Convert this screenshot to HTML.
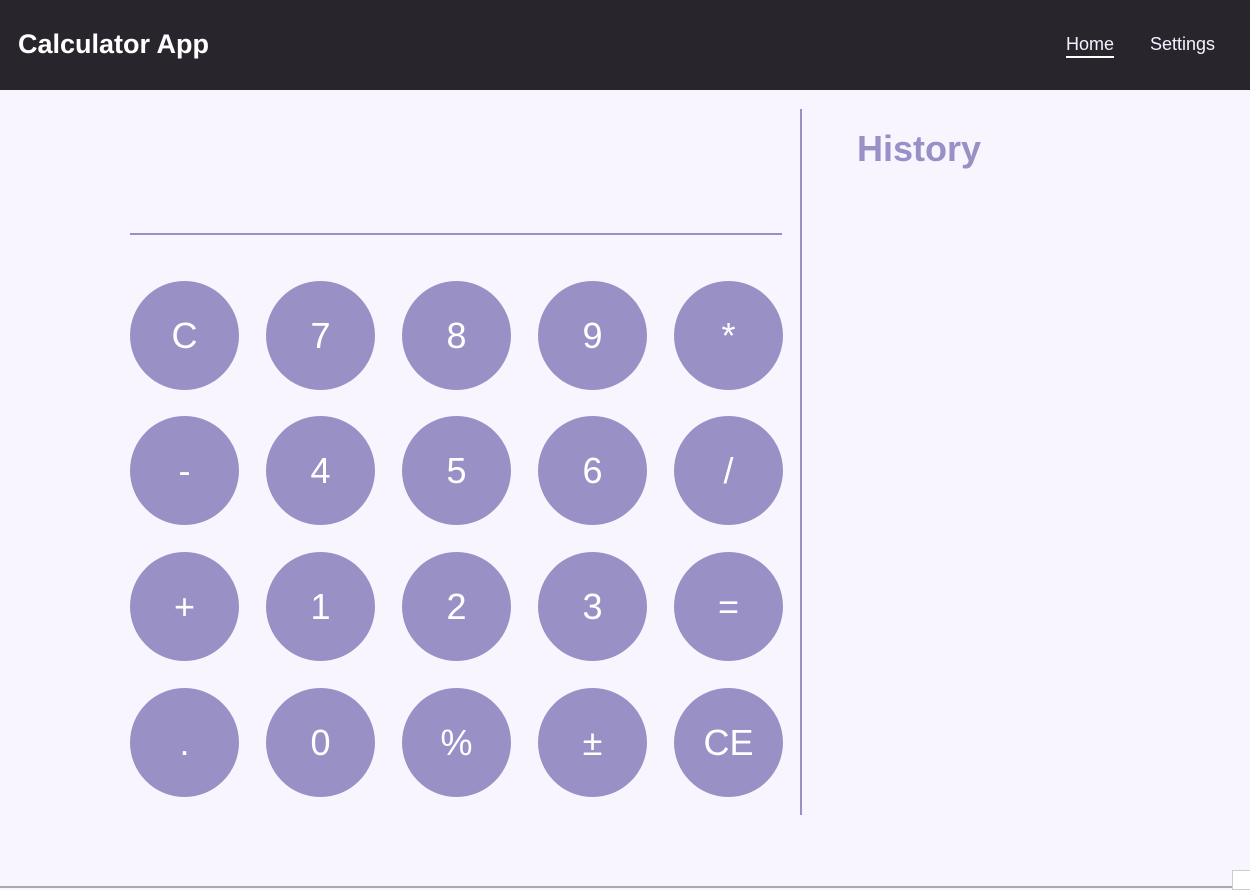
<!DOCTYPE html>
<html><head><style>
body{margin:0;width:1250px;height:888px;background:#f8f5fe;font-family:"Liberation Sans",sans-serif;position:relative;overflow:hidden}
.hdr{position:absolute;left:0;top:0;width:1250px;height:90px;background:#28252d}
.title{position:absolute;left:18px;top:29px;font-size:27px;font-weight:bold;color:#fff}
.nav{position:absolute;top:34px;font-size:18px;color:#f4f0ff}
.home{left:1066px;border-bottom:2px solid #fff;padding-bottom:1px}
.set{left:1150px}
.line{position:absolute;left:130px;top:233px;width:652px;height:2px;background:#9990c6}
.vl{position:absolute;left:800px;top:109px;width:2px;height:706px;background:#9990c6}
.hist{position:absolute;left:857px;top:128px;font-size:36px;font-weight:bold;color:#9990c6}
.b{position:absolute;width:109px;height:109px;border-radius:50%;background:#9990c6;color:#fff;font-size:36px;display:flex;align-items:center;justify-content:center}
.foot{position:absolute;left:0;top:886px;width:1250px;height:2px;background:#aaa}
.sq{position:absolute;left:1232px;top:870px;width:18px;height:18px;border:1px solid #ccc;background:#fff}
</style></head><body>
<div class="hdr"><div class="title">Calculator App</div><div class="nav home">Home</div><div class="nav set">Settings</div></div>
<div class="line"></div><div class="vl"></div>
<div class="hist">History</div>
<div class="b" style="left:130px;top:281px">C</div>
<div class="b" style="left:266px;top:281px">7</div>
<div class="b" style="left:402px;top:281px">8</div>
<div class="b" style="left:538px;top:281px">9</div>
<div class="b" style="left:674px;top:281px">*</div>
<div class="b" style="left:130px;top:416px">-</div>
<div class="b" style="left:266px;top:416px">4</div>
<div class="b" style="left:402px;top:416px">5</div>
<div class="b" style="left:538px;top:416px">6</div>
<div class="b" style="left:674px;top:416px">/</div>
<div class="b" style="left:130px;top:552px">+</div>
<div class="b" style="left:266px;top:552px">1</div>
<div class="b" style="left:402px;top:552px">2</div>
<div class="b" style="left:538px;top:552px">3</div>
<div class="b" style="left:674px;top:552px">=</div>
<div class="b" style="left:130px;top:688px">.</div>
<div class="b" style="left:266px;top:688px">0</div>
<div class="b" style="left:402px;top:688px">%</div>
<div class="b" style="left:538px;top:688px">±</div>
<div class="b" style="left:674px;top:688px">CE</div>
<div class="foot"></div><div class="sq"></div>
</body></html>
